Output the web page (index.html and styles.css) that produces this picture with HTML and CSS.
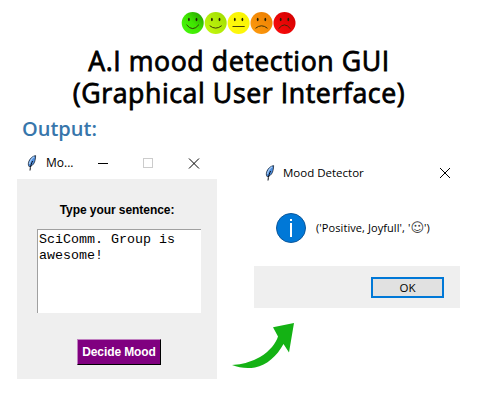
FILE: index.html
```html
<!DOCTYPE html>
<html lang="en">
<head>
<meta charset="utf-8">
<title>A.I mood detection GUI</title>
<link rel="stylesheet" href="styles.css">
</head>
<body>
<svg class="defs" width="0" height="0" aria-hidden="true">
  <defs>
    <linearGradient id="g1" x1="0" y1="1" x2="1" y2="0"><stop stop-color="#48fb10"/><stop offset=".5" stop-color="#3fe600"/><stop offset="1" stop-color="#239500"/></linearGradient>
    <linearGradient id="g2" x1="0" y1="1" x2="1" y2="0"><stop stop-color="#c8fa10"/><stop offset="1" stop-color="#9ddb00"/></linearGradient>
    <linearGradient id="g3" x1="0" y1="1" x2="1" y2="0"><stop stop-color="#fff810"/><stop offset="1" stop-color="#f8f400"/></linearGradient>
    <linearGradient id="g4" x1="0" y1="1" x2="1" y2="0"><stop stop-color="#ff9d10"/><stop offset="1" stop-color="#ea7c00"/></linearGradient>
    <linearGradient id="g5" x1="0" y1="1" x2="1" y2="0"><stop stop-color="#ff0c0c"/><stop offset="1" stop-color="#cf0000"/></linearGradient>
    <symbol id="feather" viewBox="0 0 10 16">
      <path d="M8.600.6C5.800 1 2.500 3.800 1.600 7.200c-.5 2-.2 3.500.6 4.500l1.200-.2c2.500-1.200 4.100-3.300 4.600-6 .3-1.800.8-3.400.6-4.900z" fill="#4f8fe0" stroke="#1c2430" stroke-width=".8"/>
      <path d="M7.200 1.800C4.500 3.600 3 6 2.500 9" fill="none" stroke="#a8cdf5" stroke-width="1.100"/>
      <path d="M5.600 6C4.600 8 3.300 11 3 15.500" fill="none" stroke="#0b0f18" stroke-width="1"/>
    </symbol>
  </defs>
</svg>
<main class="page">
  <header class="header">
    <svg class="faces" viewBox="0 0 116 24">
      <g>
        <circle cx="11.700" cy="12" r="11" fill="url(#g1)"/>
        <circle cx="34.700" cy="12" r="11" fill="url(#g2)"/>
        <circle cx="57.600" cy="12" r="11" fill="url(#g3)"/>
        <circle cx="80.500" cy="12" r="11" fill="url(#g4)"/>
        <circle cx="103.500" cy="12" r="11" fill="url(#g5)"/>
      </g>
      <g fill="#222008">
        <ellipse cx="7.900" cy="8.500" rx=".9" ry="1.700"/><ellipse cx="15.500" cy="8.500" rx=".9" ry="1.700"/>
        <ellipse cx="30.900" cy="8.500" rx=".9" ry="1.700"/><ellipse cx="38.500" cy="8.500" rx=".9" ry="1.700"/>
        <ellipse cx="53.800" cy="8.500" rx=".9" ry="1.700"/><ellipse cx="61.400" cy="8.500" rx=".9" ry="1.700"/>
        <ellipse cx="76.700" cy="8.500" rx=".9" ry="1.700"/><ellipse cx="84.300" cy="8.500" rx=".9" ry="1.700"/>
        <ellipse cx="99.700" cy="8.500" rx=".9" ry="1.700"/><ellipse cx="107.300" cy="8.500" rx=".9" ry="1.700"/>
      </g>
      <g fill="none" stroke="#302a08" stroke-width=".9">
        <path d="M5.500 13.700Q11.700 21.500 17.900 13.700"/>
        <path d="M28.700 14.700Q34.700 19.500 40.700 14.700"/>
        <path d="M51.500 15.500h12.200"/>
        <path d="M74.500 17.300Q80.500 12.300 86.500 17.300"/>
        <path d="M97.500 17.800Q103.500 10 109.500 17.800"/>
      </g>
    </svg>
    <h1 class="title"><span class="line1">A.I mood detection GUI</span><span class="line2">(Graphical User Interface)</span></h1>
  </header>
  <h2 class="output">Output:</h2>
  <div class="windows">
    <section class="app">
      <div class="bar app-bar">
        <svg class="feather"><use href="#feather"/></svg>
        <span class="bar-title">Mo...</span>
        <svg class="controls" viewBox="0 0 103 12" fill="none">
          <path d="M0 6.500h10" stroke="#000"/>
          <rect x="45.500" y="1.500" width="9" height="9" stroke="#ccc"/>
          <path d="M91 1.500l10 10m0-10l-10 10" stroke="#000"/>
        </svg>
      </div>
      <div class="app-body">
        <label class="prompt">Type your sentence:</label>
        <div class="entry">SciComm. Group is<br>awesome!</div>
        <button class="decide">Decide Mood</button>
      </div>
    </section>
    <div class="result">
      <section class="dialog">
        <div class="bar dialog-bar">
          <svg class="feather"><use href="#feather"/></svg>
          <span class="bar-title wide">Mood Detector</span>
          <svg class="close" viewBox="0 0 12 12"><path d="M1 1l10 10m0-10L1 11" stroke="#000"/></svg>
        </div>
        <div class="message">
          <svg class="info" viewBox="0 0 30 30"><circle cx="15" cy="15" r="14.500" fill="#0078d7" stroke="#0b579b"/><path d="M14 6h2v2h-2zM14 10h2V24h-2z" fill="#fff"/></svg>
          <span class="msg-text">('Positive, Joyfull', '<span class="smile">☺</span>')</span>
        </div>
        <div class="actions"><button class="ok">OK</button></div>
      </section>
      <svg class="arrow" viewBox="0 0 68 52"><path d="M0 45Q16 44 28 37C38 31 44 23 46 16.500L41 7.300 62 3 57 32.500 51.500 24C45 36 35 45 23 47.500 14 49 7 47.500 0 45z" fill="#14b214"/></svg>
    </div>
  </div>
</main>
</body>
</html>
```

FILE: styles.css
```css
* { box-sizing: border-box; }
body { margin: 0; background: #fff; color: #000; font-family: "Open Sans", sans-serif; }
.defs { position: absolute; width: 0; height: 0; }
.page { width: 478px; height: 400px; padding-top: 11px; overflow: hidden; }
.header { display: flex; flex-direction: column; align-items: center; }
.faces { width: 116px; height: 24px; display: block; }
.title { display: flex; flex-direction: column; align-items: center; margin: 10px 0 0; font-size: 26.700px; font-weight: 400; letter-spacing: .58px; -webkit-text-stroke: .8px #000; white-space: nowrap; }
.line1, .line2 { height: 32px; line-height: 32px; }
.output { margin: 7px 0 0 22px; height: 30px; font-size: 20px; line-height: 26px; font-weight: 600; color: #3776ab; }
.windows { display: flex; padding-left: 17px; gap: 15px; align-items: flex-start; }
.app { width: 200px; }
.bar { display: flex; align-items: center; }
.app-bar { height: 33px; padding-left: 10px; }
.feather { width: 10px; height: 16px; flex: none; }
.bar-title { width: 31px; margin-left: 9px; padding-top: 1px; font-size: 12px; line-height: 16px; white-space: nowrap; }
.controls { width: 103px; height: 12px; margin-left: 21px; flex: none; }
.app-body { height: 200px; background: #efefef; padding-left: 4px; display: flex; flex-direction: column; align-items: center; font-family: "Liberation Sans", sans-serif; }
.prompt { margin: 23px 4px 0 0; font-size: 12px; font-weight: 700; line-height: 16px; letter-spacing: -0.060px; }
.entry { width: 164px; height: 84px; margin-top: 11px; padding: 2px 1px; background: #fff; border-top: 1px solid #a0a0a0; border-left: 1px solid #a0a0a0; font: 13.330px/16px "Liberation Mono", monospace; white-space: nowrap; }
.decide { width: 84px; height: 26px; margin-top: 26px; padding: 0; background: #800080; color: #fff; border: 1px solid #000; border-top-color: #c080c0; border-left-color: #c080c0; font: 700 12px/16px "Liberation Sans", sans-serif; letter-spacing: -0.100px; white-space: nowrap; }
.result { width: 228px; }
.dialog { width: 206px; margin: 10px 0 0 22px; }
.dialog-bar { height: 33px; padding-left: 11px; }
.wide { width: 81px; margin-left: 8px; padding-top: 0; font-size: 11.500px; }
.close { width: 12px; height: 12px; margin-left: 75px; flex: none; }
.message { height: 77px; display: flex; align-items: center; padding-left: 22px; }
.info { width: 30px; height: 30px; margin-right: 10px; }
.msg-text { font-size: 11px; line-height: 16px; letter-spacing: .08px; white-space: nowrap; }
.smile { font-family: "DejaVu Sans", sans-serif; font-size: 13px; line-height: 1; color: #444; }
.actions { height: 42px; background: #efefef; display: flex; align-items: center; justify-content: flex-end; padding-right: 16px; }
.ok { width: 73px; height: 21px; padding: 0; background: #e1e1e1; color: #000; border: 2px solid #0078d7; font: 11.500px/15px "Open Sans", sans-serif; }
.arrow { display: block; width: 68px; height: 52px; margin-top: 12px; }
```
